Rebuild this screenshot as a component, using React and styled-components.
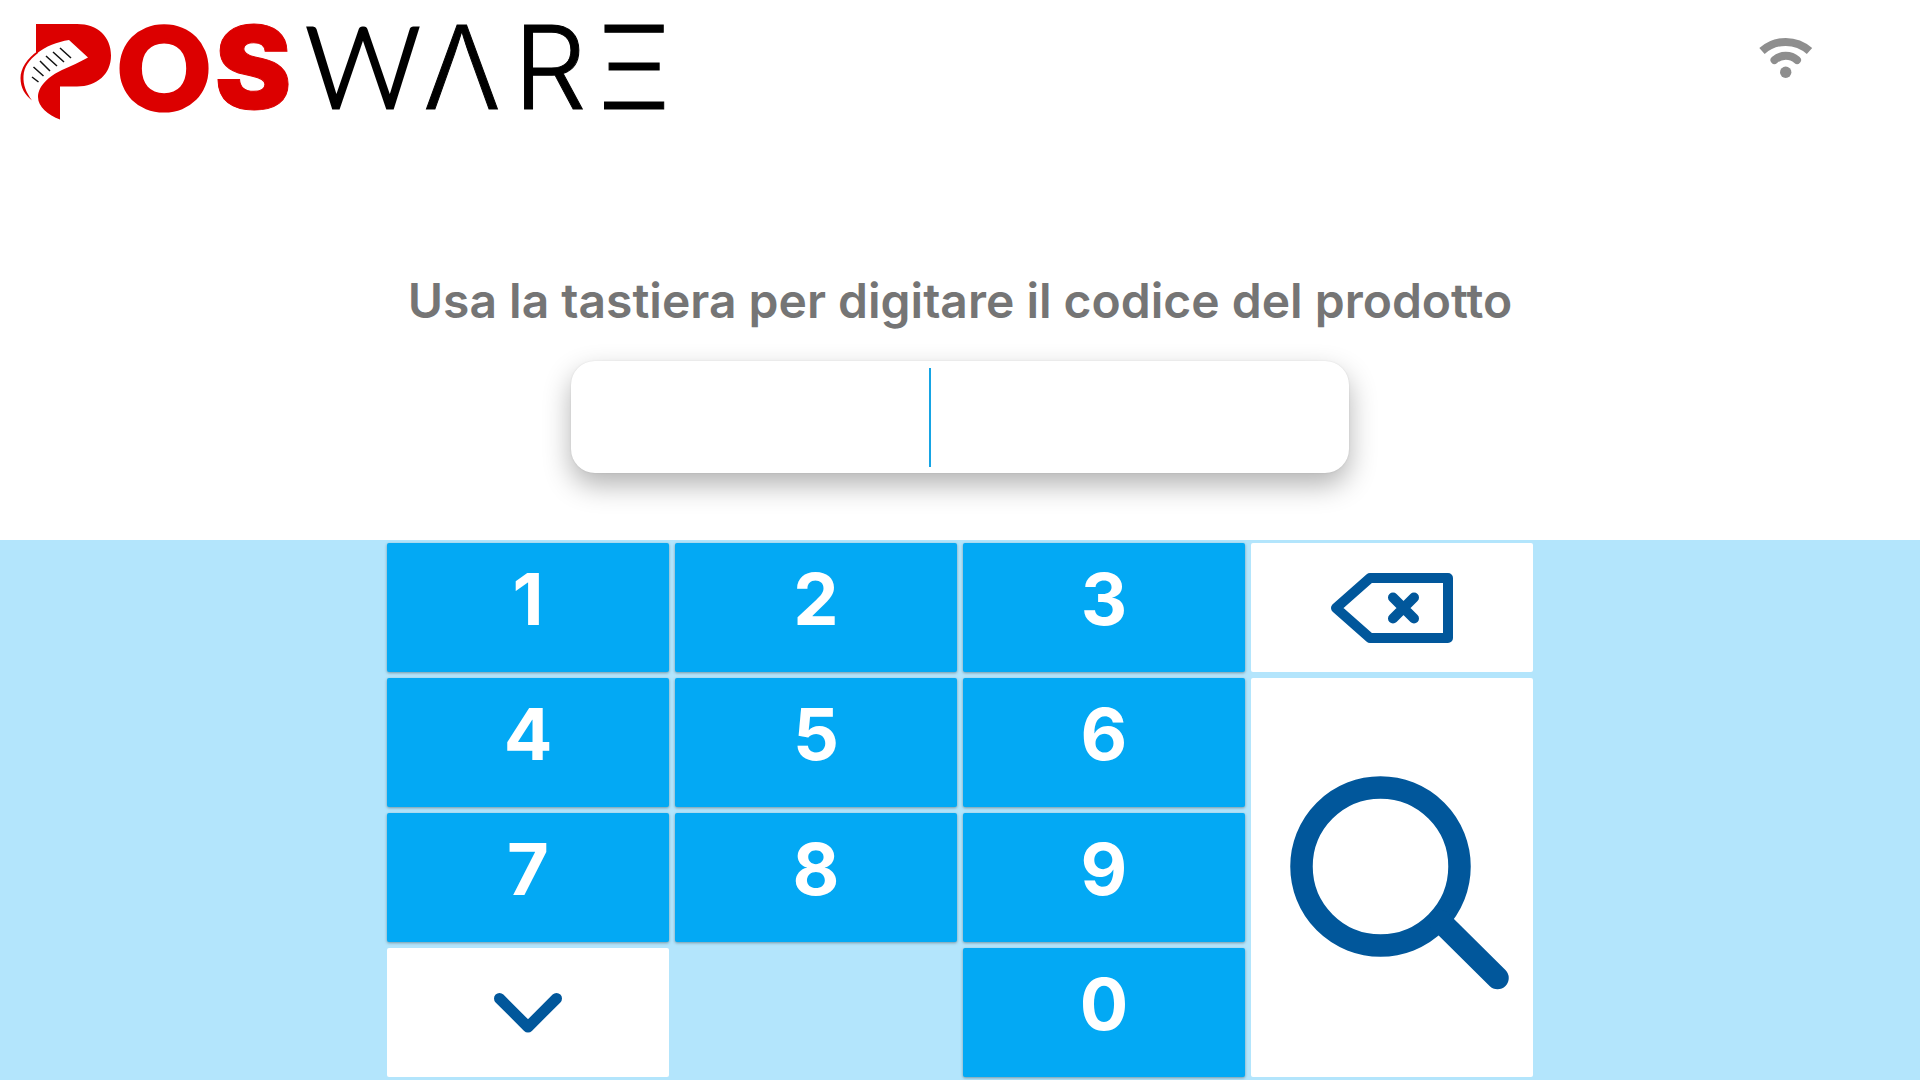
import React, { useState } from "react";
import styled, { createGlobalStyle } from "styled-components";

const GlobalStyle = createGlobalStyle`
  *, *::before, *::after { box-sizing: border-box; }
  body {
    margin: 0;
    background: #ffffff;
    font-family: Inter, "Liberation Sans", sans-serif;
  }
`;

const Page = styled.div`
  display: grid;
  grid-template-rows: 1fr 1fr;
  min-height: 100vh;
`;

const Top = styled.main`
  display: flex;
  flex-direction: column;
  justify-content: space-between;
  padding-bottom: 67px;
`;

const Header = styled.header`
  display: flex;
  align-items: flex-start;
  justify-content: space-between;
  padding: 0 106px 0 20px;
`;

const LogoSvg = styled.svg`
  width: 644px;
  height: 144px;
  overflow: visible;
`;

const Letter = styled.text`
  font-family: ${(p) => (p.$round ? "Lato" : "Inter")}, sans-serif;
  font-size: ${(p) => (p.$round ? 113 : 115)}px;
  text-anchor: middle;
`;

const Heavy = styled(Letter)`
  font-weight: 900;
  fill: #dc0000;
  stroke: #dc0000;
  stroke-width: ${(p) => (p.$round ? 5 : 1)}px;
`;

const Thin = styled(Letter)`
  font-weight: 300;
  fill: #000000;
  stroke: #000000;
  stroke-width: ${(p) => (p.$round ? 3 : 1)}px;
`;

const WifiSvg = styled.svg`
  width: 56px;
  height: 46px;
  margin-top: 34px;
  fill: none;
  stroke: #8e8e8e;
  stroke-width: 8;
`;

const CodeForm = styled.form`
  display: flex;
  flex-direction: column;
  align-items: center;
  gap: 32px;
`;

const Prompt = styled.label`
  color: #757575;
  font-size: 48px;
  font-weight: 600;
  line-height: 56px;
  text-align: center;
`;

const Field = styled.div`
  position: relative;
  width: 90%;
  max-width: 778px;
`;

const CodeInput = styled.input`
  display: block;
  width: 100%;
  height: 112px;
  padding: 0 24px;
  border: 0;
  border-radius: 24px;
  outline: 0;
  background: #ffffff;
  box-shadow: 0 12px 28px rgba(0, 0, 0, 0.3), 0 0 2px rgba(0, 0, 0, 0.1);
  color: #757575;
  font: 600 56px Inter, sans-serif;
  text-align: center;
  caret-color: transparent;
`;

const Caret = styled.span`
  position: absolute;
  top: 7px;
  bottom: 6px;
  left: 46%;
  width: 2px;
  background: #16a4e4;
`;

const Keypad = styled.section`
  display: flex;
  justify-content: center;
  padding: 3px 0;
  background: #b3e5fc;
`;

const Keys = styled.div`
  display: grid;
  grid-template-columns: repeat(4, 1fr);
  grid-template-rows: repeat(4, 1fr);
  grid-template-areas:
    "k1 k2 k3 back"
    "k4 k5 k6 search"
    "k7 k8 k9 search"
    "hide . k0 search";
  gap: 6px;
  width: 60%;
  padding: 0 3px;
`;

const Key = styled.button`
  grid-area: ${(p) => p.$area};
  display: flex;
  align-items: center;
  justify-content: center;
  padding: 0;
  border: 0;
  border-radius: 2px;
  cursor: pointer;
`;

const DigitKey = styled(Key)`
  padding-bottom: 18px;
  background: #03a9f4;
  box-shadow: 0 1px 3px rgba(0, 0, 0, 0.35);
  color: #ffffff;
  font: 700 72px/80px Inter, sans-serif;
`;

const IconKey = styled(Key)`
  background: #ffffff;
`;

const KeyIcon = styled.svg`
  width: ${(p) => p.$width};
  fill: none;
  stroke: #01579b;
  stroke-linecap: round;
  stroke-linejoin: round;
`;

function Logo() {
  return (
    <LogoSvg viewBox="20 0 644 144" role="img" aria-label="POSWARE">
      <path
        fill="#dc0000"
        d="M36 24H77C98 24 111 37 111 55.500C111 74 97 86.500 77 86.500H60V119.500C48 115 38 107 38 97C38 86 49 76 62 70C71 66 80 62 88 57.500L69 40C57 42 46 46 36 54Z"
      />
      <path
        fill="#dc0000"
        d="M38 51C27 58 20.500 69 20.500 78C20.500 88 25 95 32 100.500C26 92 23 85 23.500 76C24 67 29 60 38 53Z"
      />
      <path
        stroke="#111111"
        strokeWidth="1.500"
        d="M60 48L71 58M53 52L64 62M46 56L57 66M40 61L50 71M33.500 67L43.500 76M32 77L38.500 82"
      />
      <Heavy $round x="164" y="109">O</Heavy>
      <Heavy x="253" y="109">S</Heavy>
      <Thin $round x="363" y="108">W</Thin>
      <Thin x="462" y="109">Λ</Thin>
      <Thin x="550" y="109">R</Thin>
      <Thin x="634" y="109">Ξ</Thin>
    </LogoSvg>
  );
}

function Wifi() {
  return (
    <WifiSvg viewBox="0 0 56 46" role="img" aria-label="Wi-Fi">
      <path d="M4 17A35.500 35.500 0 0 1 51.500 17" />
      <path strokeLinecap="round" d="M16.500 26A17 17 0 0 1 39 26" />
      <circle cx="27.700" cy="38.300" r="5.700" fill="#8e8e8e" stroke="none" />
    </WifiSvg>
  );
}

const DIGITS = ["1", "2", "3", "4", "5", "6", "7", "8", "9", "0"];

export default function App() {
  const [code, setCode] = useState("");
  return (
    <>
      <GlobalStyle />
      <Page>
        <Top>
          <Header>
            <Logo />
            <Wifi />
          </Header>
          <CodeForm id="code-form" onSubmit={(e) => e.preventDefault()}>
            <Prompt htmlFor="code">Usa la tastiera per digitare il codice del prodotto</Prompt>
            <Field>
              <CodeInput
                id="code"
                inputMode="none"
                autoComplete="off"
                value={code}
                onChange={(e) => setCode(e.target.value)}
              />
              {code === "" && <Caret />}
            </Field>
          </CodeForm>
        </Top>
        <Keypad>
          <Keys>
            {DIGITS.map((d) => (
              <DigitKey key={d} type="button" $area={`k${d}`} onClick={() => setCode(code + d)}>
                {d}
              </DigitKey>
            ))}
            <IconKey type="button" $area="back" aria-label="Cancella" onClick={() => setCode(code.slice(0, -1))}>
              <KeyIcon $width="124px" viewBox="0 0 124 70">
                <path strokeWidth="10" d="M6 35L40 5H118V65H40Z" />
                <path strokeWidth="10" d="M63 24.500L84 45.500M84 24.500L63 45.500" />
              </KeyIcon>
            </IconKey>
            <IconKey type="submit" form="code-form" $area="search" aria-label="Cerca">
              <KeyIcon $width="100%" viewBox="0 0 282 282">
                <circle cx="129.500" cy="129.500" r="79" strokeWidth="22.500" />
                <path strokeWidth="22.500" d="M189 184L246.500 241" />
              </KeyIcon>
            </IconKey>
            <IconKey type="button" $area="hide" aria-label="Nascondi tastiera">
              <KeyIcon $width="68px" viewBox="0 0 68 40">
                <path strokeWidth="11" d="M5.500 5.500L34 34L62.500 5.500" />
              </KeyIcon>
            </IconKey>
          </Keys>
        </Keypad>
      </Page>
    </>
  );
}
